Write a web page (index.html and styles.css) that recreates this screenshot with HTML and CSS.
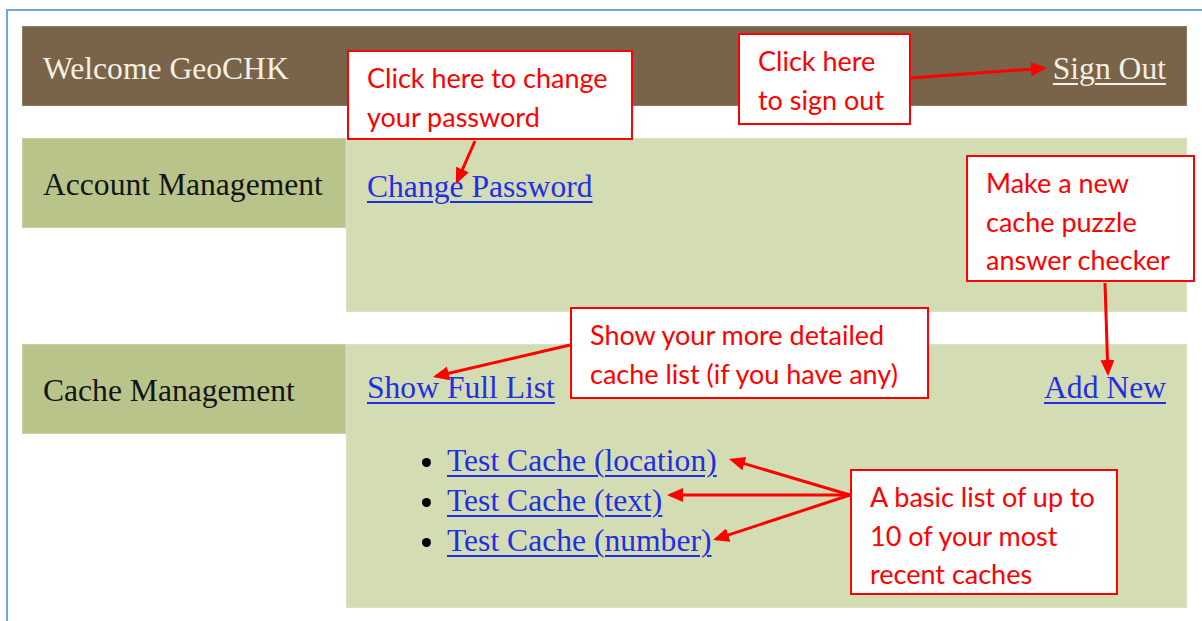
FILE: index.html
```html
<!DOCTYPE html>
<html lang="en">
<head>
<meta charset="utf-8">
<title>GeoCHK – My Account</title>
<link rel="stylesheet" href="styles.css">
</head>
<body>
<div class="frame">
  <div class="page">
    <header class="topbar">
      <span class="welcome">Welcome GeoCHK</span>
      <a class="signout" href="#">Sign Out</a>
    </header>

    <section class="row">
      <div class="label">Account Management</div>
      <div class="panel panel-account">
        <a href="#">Change Password</a>
      </div>
    </section>

    <section class="row">
      <div class="label">Cache Management</div>
      <div class="panel panel-cache">
        <div class="panel-actions">
          <a href="#">Show Full List</a>
          <a href="#">Add New</a>
        </div>
        <ul class="cache-list">
          <li><a href="#">Test Cache (location)</a></li>
          <li><a href="#">Test Cache (text)</a></li>
          <li><a href="#">Test Cache (number)</a></li>
        </ul>
      </div>
    </section>
  </div>
</div>

<!-- help annotations laid over the page -->
<svg class="arrows" width="1202" height="621" viewBox="0 0 1202 621" aria-hidden="true">
  <defs>
    <marker id="head" markerUnits="userSpaceOnUse" markerWidth="16" markerHeight="14" refX="13" refY="7" orient="auto">
      <path d="M0,0 L16,7 L0,14 z" fill="#ff0000"/>
    </marker>
  </defs>
  <g stroke="#ff0000" stroke-width="3" fill="none" marker-end="url(#head)">
    <line x1="475" y1="141" x2="457.2" y2="181.3"/>
    <line x1="911" y1="78" x2="1044" y2="68.2"/>
    <line x1="1105" y1="283" x2="1107.9" y2="373"/>
    <line x1="570" y1="345" x2="435.9" y2="376.3"/>
    <line x1="850" y1="495" x2="731.9" y2="459.9"/>
    <line x1="850" y1="495" x2="670" y2="495"/>
    <line x1="850" y1="495" x2="715.9" y2="539.1"/>
  </g>
</svg>

<div class="callout callout-password">Click here to change<br>your password</div>
<div class="callout callout-signout">Click here<br>to sign out</div>
<div class="callout callout-addnew">Make a new<br>cache puzzle<br>answer checker</div>
<div class="callout callout-fulllist">Show your more detailed<br>cache list (if you have any)</div>
<div class="callout callout-recent">A basic list of up to<br>10 of your most<br>recent caches</div>
</body>
</html>
```

FILE: styles.css
```css
html {
  overflow: hidden;
}

body {
  margin: 0;
  background: #ffffff;
  font-family: "Liberation Serif", "Times New Roman", serif;
  font-size: 31.6px;
  color: #141414;
}

/* window frame: its right and bottom edges sit outside the view */
.frame {
  margin: 9px 0 0 6px;
  width: 1196px;
  height: 612px;
  border-top: 2px solid #72a7dc;
  border-left: 2px solid #72a7dc;
  padding: 15px 0 0 14px;
  box-sizing: border-box;
  overflow: hidden;
}

.page {
  width: 1165px;
}

a {
  color: #1f30e4;
  text-decoration: underline;
  text-decoration-thickness: 2px;
  text-underline-offset: 4px;
}

/* top bar */
.topbar {
  height: 80px;
  box-sizing: border-box;
  padding: 6px 21px 0;
  display: flex;
  align-items: center;
  justify-content: space-between;
  background: #7a6449;
  color: #f4f0e6;
  box-shadow: inset 0 0 0 1px #8c7a62;
}

.signout {
  color: #f4f0e6;
}

/* management rows */
.row {
  display: flex;
  align-items: flex-start;
  margin-top: 32px;
}

.label {
  width: 324px;
  height: 90px;
  box-sizing: border-box;
  padding: 4px 0 0 21px;
  display: flex;
  align-items: center;
  background: #b9c48b;
  box-shadow: inset 0 0 0 1px #c6cf9e;
}

.panel {
  flex: 1;
  box-sizing: border-box;
  padding: 0 21px;
  line-height: 40px;
  background: #d4dcb3;
  box-shadow: inset 0 0 0 1px #dbe2c0;
}

.panel-account {
  height: 174px;
  padding-top: 29px;
}

.panel-cache {
  height: 264px;
  padding-top: 24px;
}

.panel-actions {
  display: flex;
  justify-content: space-between;
}

.cache-list {
  margin: 33px 0 0;
  padding-left: 80px;
}

.cache-list li::marker {
  color: #000000;
}

/* annotations */
.arrows {
  position: absolute;
  left: 0;
  top: 0;
  pointer-events: none;
}

.callout {
  position: absolute;
  box-sizing: border-box;
  border: 2px solid #ff0000;
  background: #ffffff;
  color: #ff0000;
  font-family: Lato, "Noto Sans", sans-serif;
  font-size: 27px;
  line-height: 38.5px;
  padding: 7px 0 0 18px;
  white-space: nowrap;
  overflow: hidden;
}

.callout-password { left: 347px; top: 50px;  width: 286px; height: 90px; }
.callout-signout  { left: 738px; top: 33px;  width: 173px; height: 92px; }
.callout-addnew   { left: 966px; top: 155px; width: 229px; height: 127px; }
.callout-fulllist { left: 570px; top: 307px; width: 359px; height: 92px; }
.callout-recent   { left: 850px; top: 469px; width: 268px; height: 126px; }
```
